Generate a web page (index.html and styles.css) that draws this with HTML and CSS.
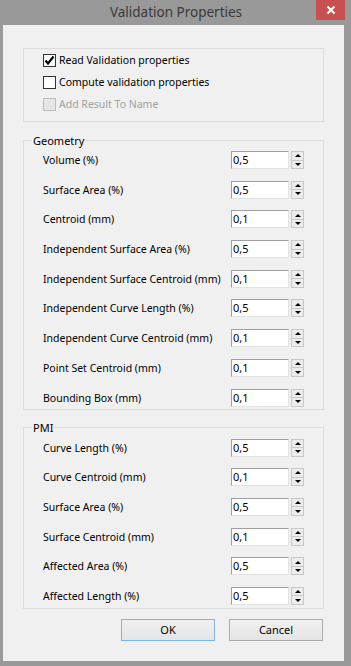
FILE: index.html
```html
<!DOCTYPE html>
<html>
<head>
<meta charset="utf-8">
<link rel="stylesheet" href="styles.css">
</head>
<body>
<div class="window">
  <div class="titlebar">
    <div class="title">Validation Properties</div>
    <div class="close">
      <svg width="10" height="10" viewBox="0 0 10 10"><path d="M1.5 1.5 L8.5 8.5 M8.5 1.5 L1.5 8.5" stroke="#fff" stroke-width="2"/></svg>
    </div>
  </div>
  <div class="panel">
    <div class="box checks">
      <label class="check"><span class="cb checked"><svg width="11" height="11" viewBox="0 0 11 11"><path d="M1.5 5.5 L4 8.5 L9.5 1.5" stroke="#000" stroke-width="2.2" fill="none"/></svg></span>Read Validation properties</label>
      <label class="check"><span class="cb"></span>Compute validation properties</label>
      <label class="check disabled"><span class="cb"></span>Add Result To Name</label>
    </div>

    <fieldset class="group geo">
      <legend>Geometry</legend>
      <div class="row"><span>Volume (%)</span><div class="spin"><div class="field">0,5</div><div class="arrows"><div class="btn"><i class="up"></i></div><div class="btn"><i class="down"></i></div></div></div></div>
      <div class="row"><span>Surface Area (%)</span><div class="spin"><div class="field">0,5</div><div class="arrows"><div class="btn"><i class="up"></i></div><div class="btn"><i class="down"></i></div></div></div></div>
      <div class="row"><span>Centroid (mm)</span><div class="spin"><div class="field">0,1</div><div class="arrows"><div class="btn"><i class="up"></i></div><div class="btn"><i class="down"></i></div></div></div></div>
      <div class="row"><span>Independent Surface Area (%)</span><div class="spin"><div class="field">0,5</div><div class="arrows"><div class="btn"><i class="up"></i></div><div class="btn"><i class="down"></i></div></div></div></div>
      <div class="row"><span>Independent Surface Centroid (mm)</span><div class="spin"><div class="field">0,1</div><div class="arrows"><div class="btn"><i class="up"></i></div><div class="btn"><i class="down"></i></div></div></div></div>
      <div class="row"><span>Independent Curve Length (%)</span><div class="spin"><div class="field">0,5</div><div class="arrows"><div class="btn"><i class="up"></i></div><div class="btn"><i class="down"></i></div></div></div></div>
      <div class="row"><span>Independent Curve Centroid (mm)</span><div class="spin"><div class="field">0,1</div><div class="arrows"><div class="btn"><i class="up"></i></div><div class="btn"><i class="down"></i></div></div></div></div>
      <div class="row"><span>Point Set Centroid (mm)</span><div class="spin"><div class="field">0,1</div><div class="arrows"><div class="btn"><i class="up"></i></div><div class="btn"><i class="down"></i></div></div></div></div>
      <div class="row"><span>Bounding Box (mm)</span><div class="spin"><div class="field">0,1</div><div class="arrows"><div class="btn"><i class="up"></i></div><div class="btn"><i class="down"></i></div></div></div></div>
    </fieldset>

    <fieldset class="group pmi">
      <legend>PMI</legend>
      <div class="row"><span>Curve Length (%)</span><div class="spin"><div class="field">0,5</div><div class="arrows"><div class="btn"><i class="up"></i></div><div class="btn"><i class="down"></i></div></div></div></div>
      <div class="row"><span>Curve Centroid (mm)</span><div class="spin"><div class="field">0,1</div><div class="arrows"><div class="btn"><i class="up"></i></div><div class="btn"><i class="down"></i></div></div></div></div>
      <div class="row"><span>Surface Area (%)</span><div class="spin"><div class="field">0,5</div><div class="arrows"><div class="btn"><i class="up"></i></div><div class="btn"><i class="down"></i></div></div></div></div>
      <div class="row"><span>Surface Centroid (mm)</span><div class="spin"><div class="field">0,1</div><div class="arrows"><div class="btn"><i class="up"></i></div><div class="btn"><i class="down"></i></div></div></div></div>
      <div class="row"><span>Affected Area (%)</span><div class="spin"><div class="field">0,5</div><div class="arrows"><div class="btn"><i class="up"></i></div><div class="btn"><i class="down"></i></div></div></div></div>
      <div class="row"><span>Affected Length (%)</span><div class="spin"><div class="field">0,5</div><div class="arrows"><div class="btn"><i class="up"></i></div><div class="btn"><i class="down"></i></div></div></div></div>
    </fieldset>

    <div class="buttons">
      <button class="button default">OK</button>
      <button class="button">Cancel</button>
    </div>
  </div>
</div>
</body>
</html>
```
FILE: styles.css
```css
html, body {
  margin: 0;
  padding: 0;
  background: #999999;
}
body {
  width: 351px;
  height: 666px;
  overflow: hidden;
  font-family: "Noto Sans", "Open Sans", "DejaVu Sans", sans-serif;
  font-size: 10.5px;
  color: #000;
}
.window {
  display: flex;
  flex-direction: column;
  height: 666px;
}
.titlebar {
  height: 25px;
  display: flex;
  align-items: center;
  justify-content: center;
  position: relative;
}
.title {
  font-size: 13.5px;
  color: #3a3a3a;
  margin-top: -1px;
  margin-left: 1px;
}
.close {
  position: absolute;
  top: 0;
  left: 316px;
  width: 29px;
  height: 20px;
  background: #c75050;
  display: flex;
  align-items: center;
  justify-content: center;
}
.panel {
  margin: 0 7px 5px 3px;
  flex: 1;
  background: #f0f0f0;
  padding: 23px 20px 0 20px;
  display: flex;
  flex-direction: column;
}
.box {
  border: 1px solid #dcdcdc;
  height: 72px;
  padding: 0 0 0 19px;
  box-sizing: content-box;
}
.checks {
  display: flex;
  flex-direction: column;
}
.check {
  display: flex;
  align-items: center;
  height: 22px;
  gap: 1px;
}
.cb {
  width: 11px;
  height: 11px;
  border: 1px solid #333;
  background: #fff;
  display: flex;
  align-items: center;
  justify-content: center;
  margin-right: 2px;
}
.disabled {
  color: #a0a0a0;
}
.disabled .cb {
  border-color: #bcbcbc;
  background: #e6e6e6;
}
.group {
  margin: 0;
  border: 1px solid #dcdcdc;
  padding: 0 19px 0 19px;
  min-width: 0;
}
.group legend {
  padding: 0 1px;
  margin-left: -11px;
  font-size: 11px;
  line-height: 15px;
}
.geo {
  margin-top: 11px;
  padding-top: 3px;
  padding-bottom: 2px;
}
.pmi {
  margin-top: 10px;
  padding-top: 4px;
  padding-bottom: 3px;
}
.row {
  height: 18px;
  display: flex;
  align-items: center;
  justify-content: space-between;
  margin-bottom: 11.7px;
}
.row:last-child {
  margin-bottom: 0;
}
.spin {
  display: flex;
  gap: 2px;
  height: 18px;
}
.field {
  height: 16px;
  background: #fff;
  border: 1px solid;
  border-color: #a0a0a0 #e3e3e3 #e3e3e3 #a0a0a0;
  line-height: 16px;
  padding-left: 1px;
  box-sizing: content-box;
  width: 55px;
  font-size: 11px;
}
.arrows {
  width: 13px;
  display: flex;
  flex-direction: column;
}
.btn {
  flex: 1;
  border: 1px solid #c8c8c8;
  background: #ececec;
  display: flex;
  align-items: center;
  justify-content: center;
}
.btn + .btn {
  border-top: none;
}
.up, .down {
  width: 0;
  height: 0;
  border-left: 3px solid transparent;
  border-right: 3px solid transparent;
}
.up {
  border-bottom: 3px solid #000;
}
.down {
  border-top: 3px solid #000;
}
.buttons {
  display: flex;
  justify-content: flex-end;
  gap: 14px;
  margin-top: 10px;
  padding-right: 1px;
}
.button {
  width: 94px;
  height: 22px;
  font-family: inherit;
  font-size: 11px;
  color: #000;
  background: linear-gradient(#f0f0f0, #e5e5e5);
  border: 1px solid #acacac;
  padding: 0;
}
.button.default {
  border-color: #7eb4ea;
}
```
